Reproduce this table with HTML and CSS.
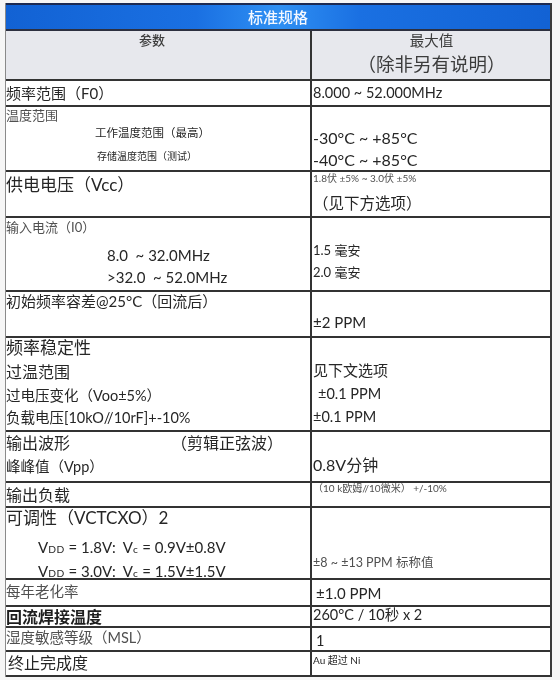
FILE: index.html
```html
<!DOCTYPE html>
<html lang="zh-CN">
<head>
<meta charset="utf-8">
<title>标准规格</title>
<link rel="stylesheet" href="styles.css">
</head>
<body>
<div class="sheet">
  <div class="title">标准规格</div>

  <div class="row head">
    <div class="c l"><span class="ln s13 h18 ctr">参数</span></div>
    <div class="c r">
      <span class="ln s14 h18 ctrr">最大值</span>
      <span class="ln s18 h28 ctrr">（除非另有说明）</span>
    </div>
  </div>

  <div class="row r1">
    <div class="c l"><span class="ln s15 h24">频率范围（F0）</span></div>
    <div class="c r"><span class="ln s14 h24">8.000 ~ 52.000MHz</span></div>
  </div>

  <div class="row r2">
    <div class="c l">
      <span class="ln s13 h16 gray">温度范围</span>
      <span class="ln s11 h20 in89">工作温度范围（最高）</span>
      <span class="ln s10 h26 in91">存储温度范围（测试）</span>
    </div>
    <div class="c r pt20">
      <span class="ln s16 h22">-30°C ~ +85°C</span>
      <span class="ln s16 h22">-40°C ~ +85°C</span>
    </div>
  </div>

  <div class="row r3">
    <div class="c l"><span class="ln s17 h26">供电电压（Vcc）</span></div>
    <div class="c r">
      <span class="ln s10 h12 gray">1.8伏 ±5% ~ 3.0伏 ±5%</span>
      <span class="ln s155 h38">（见下方选项）</span>
    </div>
  </div>

  <div class="row r4">
    <div class="c l">
      <span class="ln s13 h18 gray">输入电流（I0）</span>
      <span class="ln s15 h22 mt8 in101">8.0 &nbsp;~ 32.0MHz</span>
      <span class="ln s15 h22 in101">&gt;32.0 &nbsp;~ 52.0MHz</span>
    </div>
    <div class="c r pt21">
      <span class="ln s13 h22">1.5 毫安</span>
      <span class="ln s13 h22">2.0 毫安</span>
    </div>
  </div>

  <div class="row r5">
    <div class="c l"><span class="ln s15 h18">初始频率容差@25°C（回流后）</span></div>
    <div class="c r pt19"><span class="ln s15 h22">±2 PPM</span></div>
  </div>

  <div class="row r6">
    <div class="c l">
      <span class="ln s17 h20">频率稳定性</span>
      <span class="ln s16 h24 mt2">过温范围</span>
      <span class="ln s14 h24">过电压变化（Voo±5%）</span>
      <span class="ln s14 h20">负载电压[10kO//10rF]+-10%</span>
    </div>
    <div class="c r pt21">
      <span class="ln s15 h23">见下文选项</span>
      <span class="ln s14 h23 in5">±0.1 PPM</span>
      <span class="ln s14 h23">±0.1 PPM</span>
    </div>
  </div>

  <div class="row r7">
    <div class="c l">
      <span class="ln s16 h22 pair"><span class="pair-a">输出波形</span><span>（剪辑正弦波）</span></span>
      <span class="ln s14 h26">峰峰值（Vpp）</span>
    </div>
    <div class="c r pt21"><span class="ln s16 h24">0.8V分钟</span></div>
  </div>

  <div class="row r8">
    <div class="c l"><span class="ln s16 h23">输出负载</span></div>
    <div class="c r"><span class="ln s10 h10 gray">（10 k欧姆//10微米） +/-10%</span></div>
  </div>

  <div class="row r9">
    <div class="c l">
      <span class="ln s17 h20">可调性（VCTCXO）2</span>
      <span class="ln s15 h24 mt7 in32">V<span class="sub">DD</span> = 1.8V: &nbsp;V<span class="sub">c</span> = 0.9V±0.8V</span>
      <span class="ln s15 h20 in32">V<span class="sub">DD</span> = 3.0V: &nbsp;V<span class="sub">c</span> = 1.5V±1.5V</span>
    </div>
    <div class="c r pt47"><span class="ln s125 h16 gray">±8 ~ ±13 PPM 标称值</span></div>
  </div>

  <div class="row r10">
    <div class="c l"><span class="ln s14 h24 gray">每年老化率</span></div>
    <div class="c r"><span class="ln s15 h26 in3">±1.0 PPM</span></div>
  </div>

  <div class="row r11">
    <div class="c l"><span class="ln s16 h20 bold">回流焊接温度</span></div>
    <div class="c r"><span class="ln s14 h16">260°C / 10秒 x 2</span></div>
  </div>

  <div class="row r12">
    <div class="c l"><span class="ln s14 h20 gray">湿度敏感等级（MSL）</span></div>
    <div class="c r"><span class="ln s14 h26 in3">1</span></div>
  </div>

  <div class="row r13">
    <div class="c l"><span class="ln s16 h22 in2">终止完成度</span></div>
    <div class="c r"><span class="ln s10 h16">Au 超过 Ni</span></div>
  </div>
</div>
</body>
</html>
```
FILE: styles.css
```css
html, body {
  margin: 0;
  padding: 0;
}
body {
  background: #f6f6f6;
  font-family: Lato, "Noto Sans CJK SC", sans-serif;
  color: #262626;
}
.sheet {
  box-sizing: border-box;
  width: 547px;
  margin: 3px 0 0 5px;
  border-left: 1px solid #8a8a8a;
  border-right: 2px solid #3a3a3a;
  filter: blur(0.35px);
}
.title {
  box-sizing: border-box;
  height: 28px;
  border-top: 2px solid #1c2a52;
  border-bottom: 2px solid #2d3040;
  background: linear-gradient(90deg, #1262d4 0%, #1a70e2 35%, #2f90f3 50%, #1a70e2 65%, #1262d4 100%);
  color: #f4f8ff;
  font-family: "Noto Sans CJK SC", sans-serif;
  font-size: 15px;
  font-weight: 500;
  line-height: 24px;
  text-align: center;
}
.row {
  box-sizing: border-box;
  display: grid;
  grid-template-columns: 306px 1fr;
  border-bottom: 2px solid #333;
  background: #fff;
}
.c {
  display: flex;
  flex-direction: column;
  min-width: 0;
}
.l {
  border-right: 2px solid #333;
}
.r {
  padding-left: 1px;
}
.head { height: 50px; background: #e7e8ed; }
.r1 { height: 26px; }
.r2 { height: 65px; }
.r3 { height: 46px; }
.r4 { height: 74px; }
.r5 { height: 46px; }
.r6 { height: 94px; }
.r7 { height: 51px; }
.r8 { height: 25px; }
.r9 { height: 72px; }
.r10 { height: 27px; }
.r11 { height: 21px; }
.r12 { height: 24px; }
.r13 { height: 25px; }

.ln {
  display: block;
  white-space: nowrap;
}
.ctr { text-align: center; padding-right: 12px; font-family: "Noto Sans CJK SC", sans-serif; color: #3c3c3c; font-weight: 500; }
.ctrr { text-align: center; font-family: "Noto Sans CJK SC", sans-serif; color: #3c3c3c; }
.gray { color: #505050; }
.bold { font-weight: 700; color: #1e1e1e; }

.s10 { font-size: 10px; }
.s11 { font-size: 11.5px; }
.s125 { font-size: 12.5px; }
.s13 { font-size: 13px; }
.s14 { font-size: 14.5px; }
.s15 { font-size: 15px; }
.s155 { font-size: 15.5px; }
.s16 { font-size: 16px; }
.s17 { font-size: 17px; }
.s18 { font-size: 18.5px; }

.h10 { line-height: 10px; }
.h12 { line-height: 12px; }
.h16 { line-height: 16px; }
.h18 { line-height: 18px; }
.h20 { line-height: 20px; }
.h22 { line-height: 22px; }
.h23 { line-height: 23px; }
.h24 { line-height: 24px; }
.h26 { line-height: 26px; }
.h28 { line-height: 28px; }
.h38 { line-height: 38px; }

.mt2 { margin-top: 2px; }
.mt7 { margin-top: 7px; }
.mt8 { margin-top: 8px; }
.pt19 { padding-top: 19px; }
.pt20 { padding-top: 20px; }
.pt21 { padding-top: 21px; }
.pt47 { padding-top: 47px; }

.in2 { padding-left: 2px; }
.in3 { padding-left: 3px; }
.in5 { padding-left: 5px; }
.in32 { padding-left: 32px; }
.in89 { padding-left: 89px; }
.in91 { padding-left: 91px; }
.in101 { padding-left: 101px; }

.pair { display: flex; }
.pair-a { width: 165px; }
.sub { font-size: 0.68em; letter-spacing: 0.5px; }
```
